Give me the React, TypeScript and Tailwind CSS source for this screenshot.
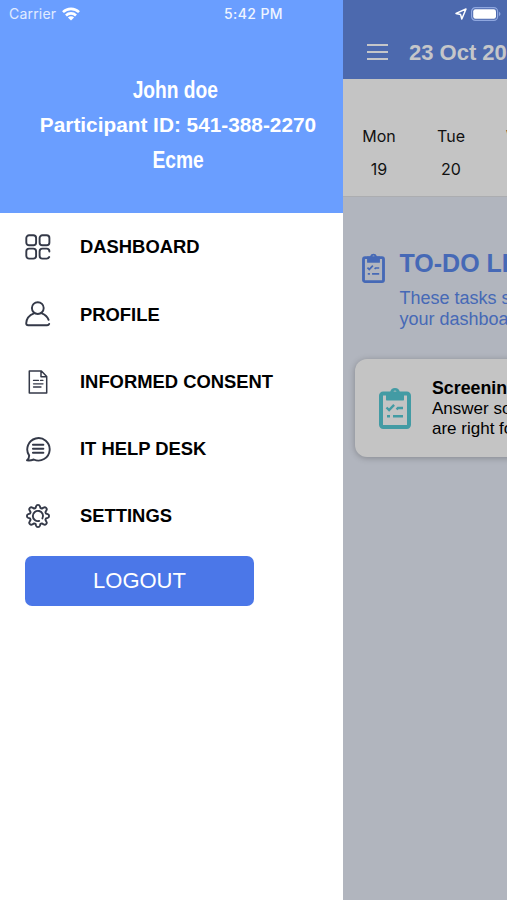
import type { ReactNode } from 'react'

interface MenuItem {
  id: string
  label: string
  icon: ReactNode
}

const MENU_ITEMS: MenuItem[] = [
  {
    id: 'dashboard',
    label: 'DASHBOARD',
    icon: (
      <>
        <rect x="1.3" y="1.3" width="9.8" height="10" rx="2.8" />
        <rect x="14.6" y="1.3" width="9.8" height="10" rx="2.8" />
        <rect x="1.3" y="14.6" width="9.8" height="10" rx="2.8" />
        <path d="M24.4 17.6v-.2a2.8 2.8 0 0 0-2.8-2.8h-4.200a2.8 2.8 0 0 0-2.8 2.8v4.4a2.8 2.8 0 0 0 2.8 2.8h4.200a2.8 2.8 0 0 0 2.6-1.6" />
      </>
    ),
  },
  {
    id: 'profile',
    label: 'PROFILE',
    icon: (
      <>
        <circle cx="12.8" cy="7.1" r="5.9" />
        <path d="M9 12.3C4.6 14 1.4 17.5 1.2 22.2c0 1.2.8 2 2 2h18.9c1 0 1.8-.5 2.1-1.3M16.8 12.3c3 1.2 5.6 3.3 6.8 6.5" />
      </>
    ),
  },
  {
    id: 'consent',
    label: 'INFORMED CONSENT',
    icon: (
      <>
        <path d="M4.3 1.9h12.100l5.3 5.6v16.6H4.3zM16 2v5.8h5.6" strokeWidth="1.5" />
        <path d="M8.5 11.4h5M8.5 14.8h9.5M8.5 18h7.5M15.5 11.4h2.4" strokeWidth="1.3" />
      </>
    ),
  },
  {
    id: 'helpdesk',
    label: 'IT HELP DESK',
    icon: (
      <>
        <path d="M2 24.300q2.200-1.700 2.200-4.700A11.200 11.200 0 1 1 8.800 23.500Q5.200 24.800 2 24.300z" />
        <path d="M8 8.700h10.300M8 12.700h10.300M8 16.700h10.300" strokeWidth="2.100" />
      </>
    ),
  },
  {
    id: 'settings',
    label: 'SETTINGS',
    icon: (
      <>
        <path d="M11.1 3.3a2 2 0 0 1 3.8 0l.5 1.7 1.5.6 1.6-.9a2 2 0 0 1 2.8 2.8l-.9 1.6.6 1.5 1.7.5a2 2 0 0 1 0 3.8l-1.7.5-.6 1.5.9 1.6a2 2 0 0 1-2.8 2.8l-1.6-.9-1.5.6-.5 1.7a2 2 0 0 1-3.8 0l-.5-1.7-1.5-.6-1.6.9a2 2 0 0 1-2.8-2.8l.9-1.6-.6-1.5-1.7-.5a2 2 0 0 1 0-3.8L5 10.6l.6-1.5-.9-1.6a2 2 0 0 1 2.8-2.8l1.6.9 1.5-.6z" />
        <path d="M14.2 17.9a5.1 5.1 0 1 1 3.2-2.500" />
      </>
    ),
  },
]

const DAYS = [
  { name: 'Mon', date: '19' },
  { name: 'Tue', date: '20' },
  { name: 'Wed', date: '21' },
]

function ClipboardIcon({ className }: { className: string }) {
  return (
    <svg viewBox="0 0 32 42" fill="none" stroke="currentColor" className={className}>
      <rect x="2" y="6.5" width="28" height="33.500" rx="2.2" strokeWidth="4" />
      <path
        d="M7 12.800V5h4.200a4.900 4.900 0 0 1 9.600 0H25v7.800q0 .7-.7.7H7.700q-.7 0-.7-.7zM16 3.500a1.500 1.500 0 1 0 0 3 1.500 1.500 0 0 0 0-3z"
        fill="currentColor"
        fillRule="evenodd"
        stroke="none"
      />
      <path d="m7.5 20.500 2.600 2.500 5-5.200M17.500 22.300l1.500-1.300h5M8 29.300h3M14 29.300h10" strokeWidth="2.400" />
    </svg>
  )
}

function StatusBar() {
  return (
    <div className="absolute inset-x-0 top-0 z-10 flex h-[27px] items-center text-white font-['Inter',sans-serif]">
      <div className="flex w-[224px] items-center gap-[6px] pl-[9px]">
        <span className="w-[47px] text-[14px] tracking-[0.2px] text-white/80">Carrier</span>
        <svg viewBox="0 0 18 14" className="h-[14px] w-[18px]" fill="none" stroke="currentColor" strokeWidth="2.6">
          <path d="M1 5.2a11.3 11.3 0 0 1 16 0M4 8.5a7 7 0 0 1 10 0" />
          <path d="M9 13.6 5.9 10.5a4.4 4.4 0 0 1 6.2 0z" fill="currentColor" stroke="none" />
        </svg>
      </div>
      <span className="w-[60px] whitespace-nowrap text-[14px] font-medium tracking-[0.4px] text-white/90">5:42 PM</span>
      <div className="ml-auto flex items-center gap-[4px] pr-[6px]">
        <svg viewBox="0 0 12 12" className="size-3" fill="none" stroke="currentColor" strokeWidth="1.5" strokeLinejoin="round">
          <path d="M11 1 6.8 11 5.6 6.6 1 5.4z" />
        </svg>
        <svg viewBox="0 0 30 14" className="h-[14px] w-[30px]">
          <rect x="0.6" y="0.6" width="26" height="12.8" rx="3.8" fill="none" stroke="#8fa7df" strokeWidth="1.2" />
          <rect x="2.2" y="2.2" width="22.8" height="9.600" rx="2.200" fill="white" />
          <path d="M28 4.8q3 2.2 0 4.4z" fill="#8fa7df" />
        </svg>
      </div>
    </div>
  )
}

function Drawer() {
  return (
    <aside className="flex w-[343px] shrink-0 flex-col bg-white">
      <div className="flex h-[213px] flex-col items-center bg-[#6a9eff] pt-[72px] pl-[13px] font-bold text-white">
        <p className="mr-[5px] h-[35px] scale-x-[0.8] text-[24px] leading-[36px]">John doe</p>
        <p className="h-[35px] whitespace-nowrap text-[20.8px] leading-[36px]">Participant ID: 541-388-2270</p>
        <p className="h-[35px] scale-x-[0.8] text-[24px] leading-[36px]">Ecme</p>
      </div>

      <nav className="flex flex-col pt-[0.600px]">
        {MENU_ITEMS.map((item) => (
          <a key={item.id} className="flex h-[67.2px] items-center gap-[29.500px] pl-[24.500px]">
            <svg
              viewBox="0 0 26 26"
              className="size-[26px] text-[#343948]"
              fill="none"
              stroke="currentColor"
              strokeWidth="1.9"
              strokeLinecap="round"
              strokeLinejoin="round"
            >
              {item.icon}
            </svg>
            <span className="text-[18.4px] font-bold text-black">{item.label}</span>
          </a>
        ))}
      </nav>

      <button className="mt-[6px] ml-[25px] h-[50px] w-[229px] rounded-[7px] bg-[#4b77e8] text-[22px] text-white">
        LOGOUT
      </button>
    </aside>
  )
}

function Dashboard() {
  return (
    <main className="flex min-w-0 flex-1 flex-col overflow-hidden bg-[#b1b5be]">
      <header className="flex h-[79px] shrink-0 items-center gap-[21px] bg-[#4c69ae] pt-[25px] pl-6 text-[#c5c6c9]">
        <div className="flex w-[21px] shrink-0 flex-col gap-[5px]">
          <span className="h-[2px] bg-current" />
          <span className="h-[2px] bg-current" />
          <span className="h-[2px] bg-current" />
        </div>
        <h1 className="whitespace-nowrap text-[22px] font-bold">23 Oct 2020</h1>
      </header>

      <div className="flex h-[118px] shrink-0 border-b border-[#acadb0] bg-[#c4c4c4] pt-[41px] text-[16px] text-[#111] font-['Inter',sans-serif]">
        {DAYS.map((day) => (
          <div key={day.name} className="flex w-[72px] shrink-0 flex-col items-center gap-[1px] leading-8">
            <span>{day.name}</span>
            <span>{day.date}</span>
          </div>
        ))}
      </div>

      <section className="flex pt-[50px] pl-[19px] text-[#4669b6]">
        <ClipboardIcon className="mt-[6px] h-[30px] w-[23px] shrink-0" />
        <div className="ml-[14.500px] whitespace-nowrap">
          <h2 className="text-[25px] font-bold leading-[32px]">TO-DO LIST</h2>
          <p className="mt-[9px] text-[18px] leading-[21px]">
            These tasks should appear on
            <br />
            your dashboard
          </p>
        </div>
      </section>

      <div className="mt-[29px] ml-3 flex h-[98px] w-[400px] shrink-0 rounded-[12px] bg-[#c4c4c4] shadow-[0_1px_6px_rgba(0,0,0,0.25)]">
        <ClipboardIcon className="mt-7 ml-6 h-[42px] w-8 text-[#439ba4]" />
        <div className="ml-[21px] pt-[19px] leading-5 text-black">
          <h3 className="text-[17.8px] font-bold">Screening</h3>
          <p className="mt-[1px] whitespace-nowrap text-[17px]">
            Answer some questions to see if you
            <br />
            are right for this study
          </p>
        </div>
      </div>
    </main>
  )
}

export default function App() {
  return (
    <div className="relative flex h-[900px] w-[507px] overflow-hidden font-['Liberation_Sans',Arial,sans-serif]">
      <StatusBar />
      <Drawer />
      <Dashboard />
    </div>
  )
}
